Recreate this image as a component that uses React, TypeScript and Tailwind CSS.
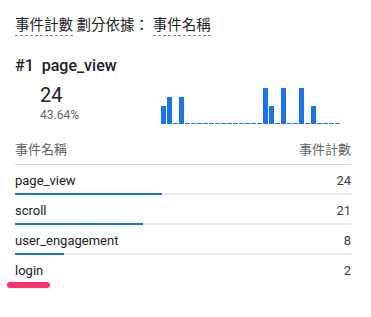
import React from 'react'

const rows = [
  { name: 'page_view', count: 24 },
  { name: 'scroll', count: 21 },
  { name: 'user_engagement', count: 8 },
  { name: 'login', count: 2 },
]

const total = 55

// events per interval for the top event
const series = [2, 3, 0, 3, 0, 0, 0, 0, 0, 0, 0, 0, 0, 0, 0, 0, 0, 4, 2, 0, 4, 0, 0, 4, 0, 2, 0, 0, 0, 0]

export default function App() {
  return (
    <div
      className="bg-white w-[371px] h-[317px] pl-[15px] pr-[20px] pt-[16px] text-[#202124]"
      style={{ fontFamily: 'Roboto, "Noto Sans CJK TC", sans-serif' }}
    >
      <div className="text-[14.5px] leading-[19px]">
        <span className="inline-block border-b border-dashed border-[#80868b]">事件計數</span>
        <span> 劃分依據： </span>
        <span className="inline-block border-b border-dashed border-[#80868b]">事件名稱</span>
      </div>

      <div className="mt-[20px] text-[16px] leading-[20px] font-medium">#1&nbsp; page_view</div>

      <div className="mt-[7px] flex items-end">
        <div className="w-[146px] pl-[25px]">
          <div className="text-[20px] leading-[24px]">24</div>
          <div className="text-[12px] leading-[16px] text-[#5f6368]">43.64%</div>
        </div>
        <div className="flex items-end gap-[1px] h-[36px] mb-[-1px]">
          {series.map((v, i) => (
            <div
              key={i}
              className="w-[5px] bg-[#1a73e8]"
              style={{ height: v === 0 ? 1 : v * 9 }}
            />
          ))}
        </div>
      </div>

      <div className="mt-[17px] flex justify-between border-b border-[#dadce0] pb-[4px] text-[13px] leading-[20px] text-[#5f6368]">
        <span>事件名稱</span>
        <span>事件計數</span>
      </div>

      {rows.map((row, i) => (
        <div key={row.name} className="relative">
          <div className="flex justify-between items-center h-[28px] pt-[4px] text-[13px]">
            <span>{row.name}</span>
            <span className="text-[#3c4043]">{row.count}</span>
          </div>
          {i < rows.length - 1 ? (
            <div className="h-[2px] bg-[#e8eaed]">
              <div className="h-full bg-[#1a73e8]" style={{ width: `${(row.count / total) * 100}%` }} />
            </div>
          ) : (
            <div className="absolute left-[-8px] top-[27px] w-[43px] h-[6px] rounded-full bg-[#ff2e6e]" />
          )}
        </div>
      ))}
    </div>
  )
}
